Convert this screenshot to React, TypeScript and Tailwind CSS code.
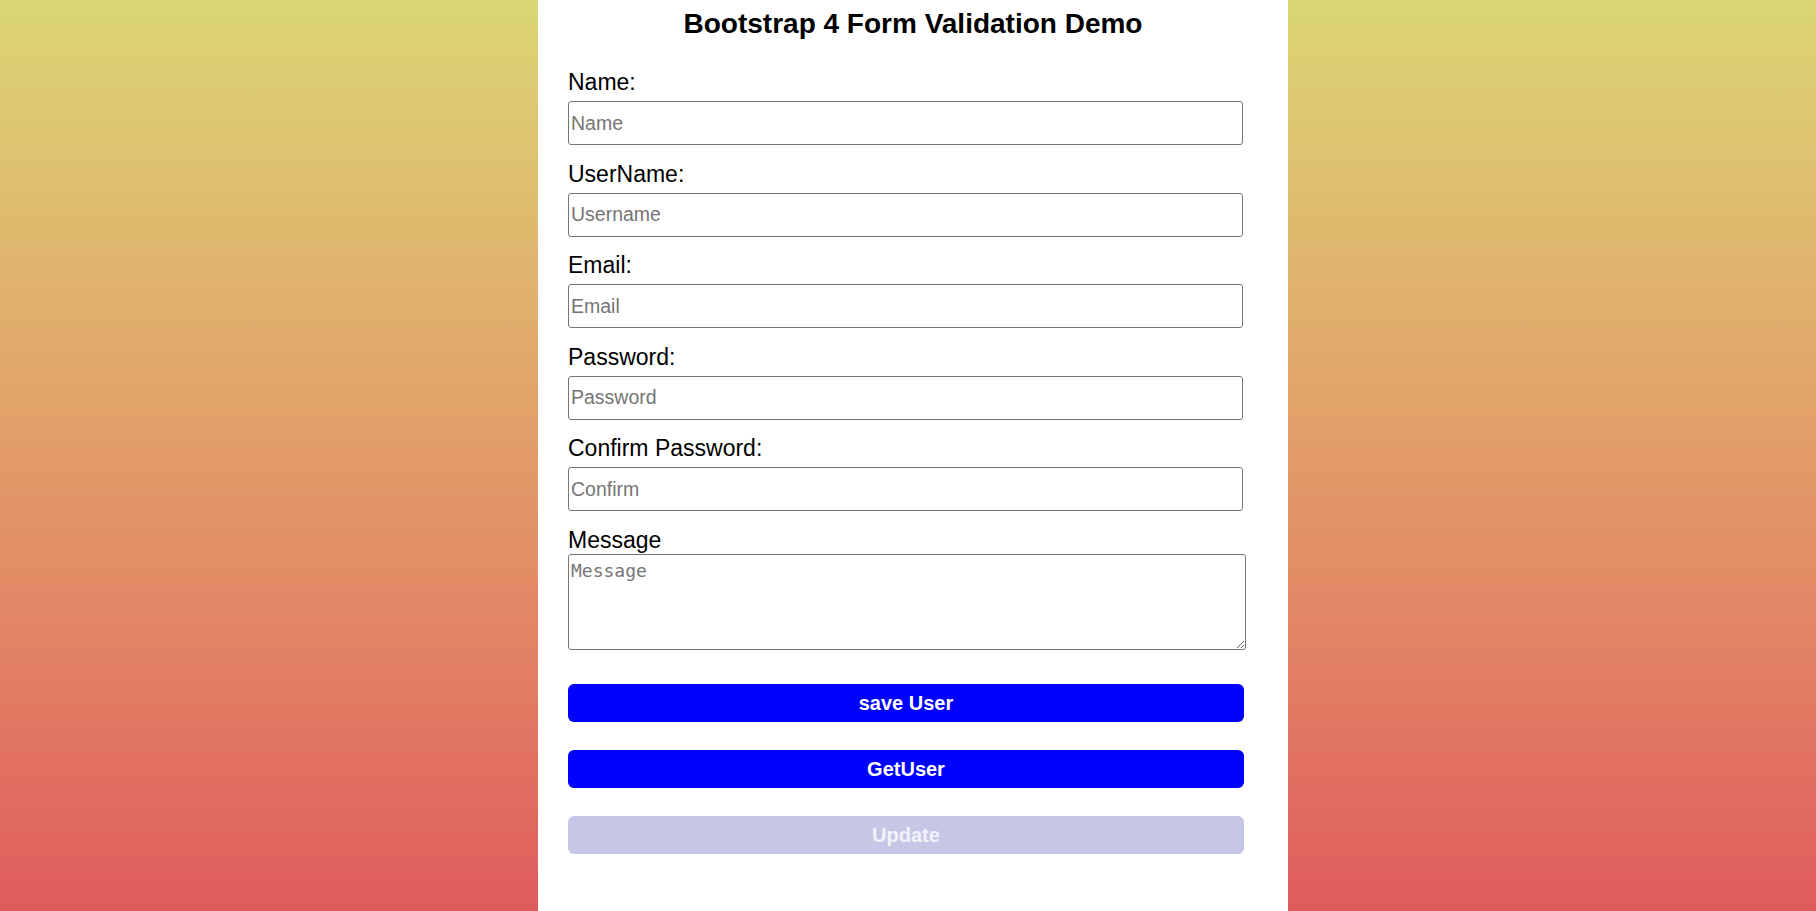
import { useState } from "react";

const fields = [
  { label: "Name:", placeholder: "Name", type: "text" },
  { label: "UserName:", placeholder: "Username", type: "text" },
  { label: "Email:", placeholder: "Email", type: "email" },
  { label: "Password:", placeholder: "Password", type: "password" },
  { label: "Confirm Password:", placeholder: "Confirm", type: "password" },
];

export default function App() {
  const [values, setValues] = useState<Record<string, string>>({});

  const update = (key: string, v: string) => {
    setValues((prev) => ({ ...prev, [key]: v }));
  };

  return (
    <div className="flex min-h-screen justify-center bg-linear-to-b from-[#dad673] to-[#df5b5d] pl-[10px] font-['Liberation_Sans',Arial,sans-serif]">
      <div className="min-h-screen w-[750px] bg-white pl-[30px] pt-[8px]">
        <h1 className="-ml-[30px] text-center text-[28px] font-bold leading-[32px] text-black">
          Bootstrap 4 Form Validation Demo
        </h1>

        <form className="mt-[29px]" onSubmit={(e) => e.preventDefault()}>
          {fields.map((f) => (
            <div key={f.placeholder} className="mb-[15.5px]">
              <label className="block text-[23px] leading-[26px] text-black">{f.label}</label>
              <input
                type={f.type}
                placeholder={f.placeholder}
                value={values[f.placeholder] ?? ""}
                onChange={(e) => update(f.placeholder, e.target.value)}
                className="mt-[6px] block h-[44px] w-[675px] rounded-[3px] border border-[#767676] px-[2px] text-[19.5px] text-black outline-none placeholder:text-[#757575]"
              />
            </div>
          ))}

          <label className="block text-[23px] leading-[26px] text-black">Message</label>
          <textarea
            placeholder="Message"
            value={values.message ?? ""}
            onChange={(e) => update("message", e.target.value)}
            className="mt-[1px] block h-[96px] w-[678px] rounded-[3px] border border-[#767676] px-[2px] pt-[5px] font-['DejaVu_Sans_Mono',monospace] text-[18px] leading-[21px] text-black outline-none placeholder:text-[#757575]"
          />

          <div className="mt-[34px] flex w-[676px] flex-col gap-[28px]">
            <button
              type="submit"
              className="h-[38px] rounded-[6px] bg-[#0000ff] text-[20px] font-bold text-white"
            >
              save User
            </button>
            <button
              type="button"
              className="h-[38px] rounded-[6px] bg-[#0000ff] text-[20px] font-bold text-white"
            >
              GetUser
            </button>
            <button
              type="button"
              disabled
              className="h-[38px] rounded-[6px] bg-[#c6c7e6] text-[20px] font-bold text-[#f2f2fa]"
            >
              Update
            </button>
          </div>
        </form>
      </div>
    </div>
  );
}
